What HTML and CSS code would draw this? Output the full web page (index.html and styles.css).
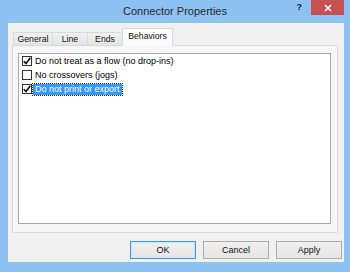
FILE: index.html
```html
<!DOCTYPE html>
<html lang="en">

<head>
    <meta charset="UTF-8">
    <title>Connector Properties</title>
    <link rel="stylesheet" href="styles.css">
</head>

<body>
    <div class="window">
        <div class="titlebar">
            <div></div>
            <div class="title">Connector Properties</div>
            <div class="controls">
                <span class="help">?</span>
                <span class="close">
                    <svg width="8" height="8" viewBox="0 0 8 8">
                        <path d="M1 1 L7 7 M7 1 L1 7" stroke="#fff" stroke-width="1.6" />
                    </svg>
                </span>
            </div>
        </div>

        <div class="client">
            <div class="tabs">
                <div class="tab tab-general">General</div>
                <div class="tab tab-line">Line</div>
                <div class="tab tab-ends">Ends</div>
                <div class="tab tab-behaviors active">Behaviors</div>
            </div>

            <div class="panel">
                <div class="list">
                    <div class="row">
                        <span class="check checked">
                            <svg width="10" height="10" viewBox="0 0 10 10">
                                <path d="M1.8 5.2 L4 7.6 L8.4 1.8" fill="none" stroke="#111" stroke-width="1.6" />
                            </svg>
                        </span>
                        <span class="label">Do not treat as a flow (no drop-ins)</span>
                    </div>
                    <div class="row">
                        <span class="check"></span>
                        <span class="label">No crossovers (jogs)</span>
                    </div>
                    <div class="row">
                        <span class="check checked">
                            <svg width="10" height="10" viewBox="0 0 10 10">
                                <path d="M1.8 5.2 L4 7.6 L8.4 1.8" fill="none" stroke="#111" stroke-width="1.6" />
                            </svg>
                        </span>
                        <span class="label selected">Do not print or export</span>
                    </div>
                </div>
            </div>

            <div class="buttons">
                <button class="btn default">OK</button>
                <button class="btn">Cancel</button>
                <button class="btn">Apply</button>
            </div>
        </div>
    </div>
</body>

</html>
```

FILE: styles.css
```css
body {
    margin: 0;
    font-family: "Liberation Sans", Arial, sans-serif;
}

.window {
    width: 350px;
    height: 272px;
    background-color: #8cc1f2;
    overflow: hidden;
}

.titlebar {
    display: grid;
    grid-template-columns: 1fr auto 1fr;
    height: 23px;
}

.title {
    font-size: 11px;
    line-height: 23px;
    color: #2b2b2b;
}

.controls {
    display: flex;
    justify-content: flex-end;
    align-items: flex-start;
    padding-right: 6px;
}

.help {
    font-size: 9px;
    font-weight: bold;
    color: #1b1b1b;
    line-height: 15px;
    margin-right: 9px;
}

.close {
    display: flex;
    align-items: center;
    justify-content: center;
    width: 33px;
    height: 15px;
    background-color: #c75050;
}

.client {
    width: 336px;
    height: 239px;
    margin-left: 8px;
    background-color: #f0f0f0;
    padding-left: 4px;
    box-sizing: border-box;
}

.tabs {
    display: flex;
    align-items: flex-end;
    height: 17px;
    padding-top: 5px;
    padding-left: 1px;
}

.tab {
    height: 13px;
    box-sizing: border-box;
    border: 1px solid #d9d9d9;
    border-bottom: none;
    margin-left: -1px;
    background: linear-gradient(#f0f0f0, #e5e5e5);
    font-size: 8.7px;
    line-height: 12px;
    text-align: center;
    color: #111;
}

.tab-general {
    width: 40px;
    margin-left: 0;
}

.tab-line {
    width: 36px;
}

.tab-ends {
    width: 36px;
}

.tab-behaviors {
    width: 51px;
}

.tab.active {
    position: relative;
    height: 18px;
    margin-bottom: -1px;
    background: #fbfbfb;
    line-height: 15px;
}

.panel {
    width: 326px;
    height: 188px;
    box-sizing: border-box;
    border: 1px solid #d9d9d9;
    background-color: #f6f6f6;
    padding: 7px 6px 8px 5px;
}

.list {
    height: 100%;
    box-sizing: border-box;
    border: 1px solid #a8a8a8;
    background-color: #fff;
    padding-left: 3px;
}

.row {
    display: flex;
    align-items: center;
    height: 14px;
}

.check {
    width: 10px;
    height: 10px;
    box-sizing: border-box;
    border: 1px solid #333;
    background-color: #fff;
    display: flex;
    align-items: center;
    justify-content: center;
}

.check svg {
    flex: none;
}

.label {
    margin-left: 1px;
    padding: 0 2px;
    font-size: 9px;
    line-height: 11px;
    color: #000;
}

.label.selected {
    background-color: #3399ff;
    color: #fff;
    outline: 1px dotted #333;
}

.buttons {
    display: flex;
    justify-content: flex-end;
    gap: 7px;
    margin-top: 8px;
    padding-right: 2px;
}

.btn {
    width: 66px;
    height: 18px;
    padding: 0;
    border: 1px solid #acacac;
    background: linear-gradient(#f0f0f0, #e5e5e5);
    font-family: "Liberation Sans", Arial, sans-serif;
    font-size: 9px;
    color: #111;
}

.btn.default {
    border-color: #3c9ae8;
    box-shadow: inset 0 0 0 1px #cde6fb;
}
```
